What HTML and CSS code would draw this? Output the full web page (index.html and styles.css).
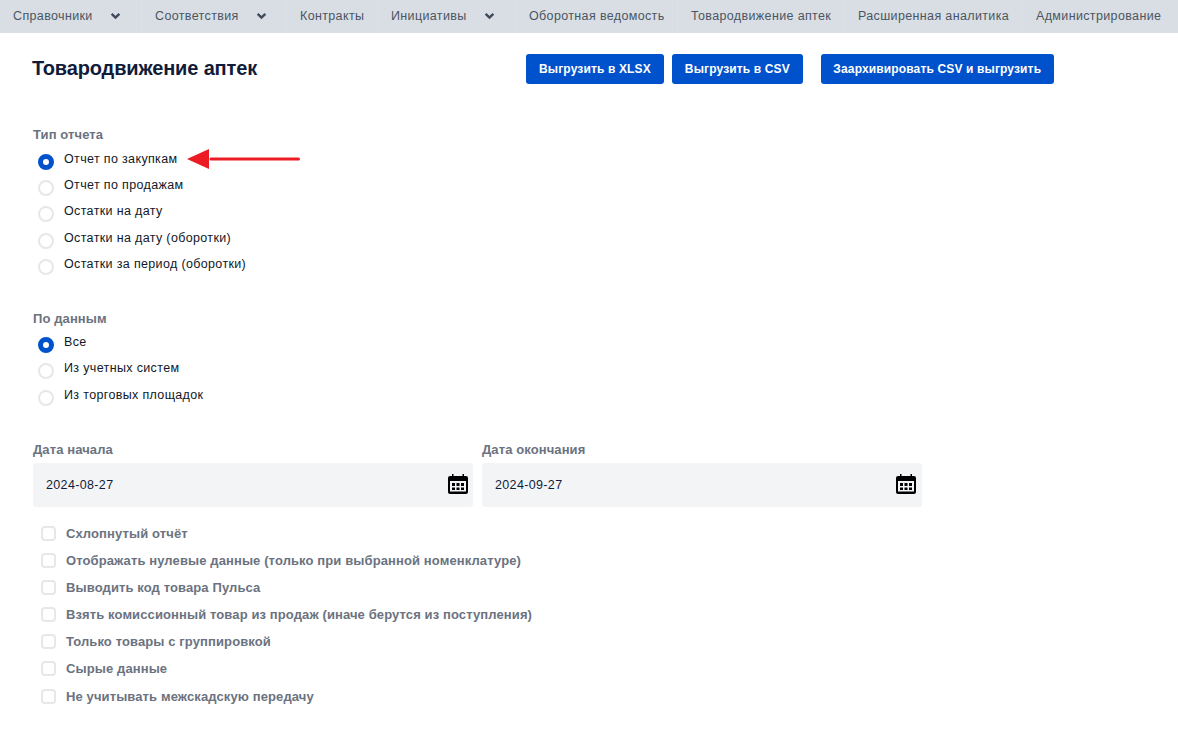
FILE: index.html
```html
<!DOCTYPE html>
<html lang="ru">
<head>
    <meta charset="UTF-8">
    <title>Товародвижение аптек</title>
    <link rel="stylesheet" href="styles.css">
</head>
<body>
    <nav class="nav">
        <a class="nav-item w-1">Справочники<svg class="chev" viewBox="0 0 10 7"><path d="M1.5 1.5 5 5l3.500-3.500"/></svg></a>
        <a class="nav-item w-2">Соответствия<svg class="chev" viewBox="0 0 10 7"><path d="M1.5 1.5 5 5l3.500-3.500"/></svg></a>
        <a class="nav-item w-3">Контракты</a>
        <a class="nav-item w-4">Инициативы<svg class="chev" viewBox="0 0 10 7"><path d="M1.5 1.5 5 5l3.500-3.500"/></svg></a>
        <a class="nav-item w-5">Оборотная ведомость</a>
        <a class="nav-item w-6">Товародвижение аптек</a>
        <a class="nav-item w-7">Расширенная аналитика</a>
        <a class="nav-item w-8">Администрирование</a>
    </nav>

    <main class="page">
        <header class="head">
            <h1>Товародвижение аптек</h1>
            <div class="actions">
                <button class="btn">Выгрузить в XLSX</button>
                <button class="btn">Выгрузить в CSV</button>
                <button class="btn btn-wide">Заархивировать CSV и выгрузить</button>
            </div>
        </header>

        <section class="group group-first">
            <div class="label label-first">Тип отчета</div>
            <div class="radio"><span class="dot on"></span>Отчет по закупкам</div>
            <div class="radio"><span class="dot"></span>Отчет по продажам</div>
            <div class="radio"><span class="dot"></span>Остатки на дату</div>
            <div class="radio"><span class="dot"></span>Остатки на дату (оборотки)</div>
            <div class="radio"><span class="dot"></span>Остатки за период (оборотки)</div>
            <svg class="arrow" viewBox="0 0 113 20"><path d="M111.500 10H24" stroke="#ed1c24" stroke-width="3" stroke-linecap="round"/><path d="M0 10 22 0v20z" fill="#ed1c24"/></svg>
        </section>

        <section class="group group-second">
            <div class="label label-second">По данным</div>
            <div class="radio"><span class="dot on"></span>Все</div>
            <div class="radio"><span class="dot"></span>Из учетных систем</div>
            <div class="radio"><span class="dot"></span>Из торговых площадок</div>
        </section>

        <section class="dates">
            <div class="date-col">
                <div class="label">Дата начала</div>
                <div class="date-input">2024-08-27
                    <svg class="cal" viewBox="0 0 20 20"><path fill-rule="evenodd" d="M4 0h1.500v2h9V0H16v2h2a2 2 0 0 1 2 2v14a2 2 0 0 1-2 2H2a2 2 0 0 1-2-2V4a2 2 0 0 1 2-2h2zM2 7v10.500h16V7z"/><path d="M4 9h3v3H4zM8.500 9h3v3h-3zM13 9h3v3h-3zM4 13.500h3v2.500H4zM8.500 13.500h3v2.500h-3zM13 13.500h3v2.500h-3z"/></svg>
                </div>
            </div>
            <div class="date-col">
                <div class="label">Дата окончания</div>
                <div class="date-input date-input-end">2024-09-27
                    <svg class="cal" viewBox="0 0 20 20"><path fill-rule="evenodd" d="M4 0h1.500v2h9V0H16v2h2a2 2 0 0 1 2 2v14a2 2 0 0 1-2 2H2a2 2 0 0 1-2-2V4a2 2 0 0 1 2-2h2zM2 7v10.500h16V7z"/><path d="M4 9h3v3H4zM8.500 9h3v3h-3zM13 9h3v3h-3zM4 13.500h3v2.500H4zM8.500 13.500h3v2.500h-3zM13 13.500h3v2.500h-3z"/></svg>
                </div>
            </div>
        </section>

        <section class="checks">
            <div class="check"><span class="box"></span>Схлопнутый отчёт</div>
            <div class="check"><span class="box"></span>Отображать нулевые данные (только при выбранной номенклатуре)</div>
            <div class="check"><span class="box"></span>Выводить код товара Пульса</div>
            <div class="check"><span class="box"></span>Взять комиссионный товар из продаж (иначе берутся из поступления)</div>
            <div class="check"><span class="box"></span>Только товары с группировкой</div>
            <div class="check"><span class="box"></span>Сырые данные</div>
            <div class="check"><span class="box"></span>Не учитывать межскадскую передачу</div>
        </section>
    </main>
</body>
</html>
```

FILE: styles.css
```css
html, body { margin: 0; padding: 0; }
body { font-family: "Liberation Sans", Arial, sans-serif; background: #fff; color: #111827; height: 731px; overflow: hidden; }

.nav { display: flex; height: 33px; background: #d9dee4; }
.nav-item { display: flex; align-items: center; box-sizing: border-box; height: 32px; padding-left: 13px; font-size: 12.500px; letter-spacing: 0.36px; color: #4b5563; border-right: 1px solid #dde1e6; white-space: nowrap; }
.w-1 { width: 142px; }
.w-2 { width: 145px; }
.w-3 { width: 91px; }
.w-4 { width: 138px; }
.w-5 { width: 162px; }
.w-6 { width: 167px; padding-left: 13px; }
.w-7 { width: 178px; }
.w-8 { flex: 1; border-right: 0; }
.chev { width: 11px; height: 8px; margin-left: 17px; fill: none; stroke: #3f4a5c; stroke-width: 2.200; }

.page { padding: 0 32px 0 33px; }
.head { display: flex; align-items: flex-start; height: 51px; padding-top: 21px; }
h1 { margin: 1px 0 0 -1px; width: 494px; font-size: 20px; line-height: 27px; font-weight: 700; letter-spacing: -0.15px; color: #111c3a; }
.actions { display: flex; }
.btn { height: 30px; padding: 0 13px; margin-right: 8px; border: 0; border-radius: 3px; background: #0052cc; color: #fff; font: 700 12px "Liberation Sans", Arial, sans-serif; letter-spacing: 0.14px; }
.btn-wide { margin-left: 10px; margin-right: 0; padding: 0 12.500px; }

.label { font-size: 13px; font-weight: 700; line-height: 16px; letter-spacing: 0.1px; color: #6b7280; }
.label-first { margin-bottom: 5.500px; }
.label-second { margin-bottom: 5px; }
.group { position: relative; }
.group-first { margin-top: 22px; }
.group-second { margin-top: 30.500px; }
.radio { display: flex; height: 26.400px; align-items: flex-start; font-size: 12.500px; letter-spacing: 0.35px; line-height: 16px; color: #111827; padding-top: 2px; box-sizing: border-box; }
.dot { width: 16px; height: 16px; margin: 3px 10px 0 5px; flex: none; box-sizing: border-box; border: 2px solid #e5e7eb; border-radius: 50%; background: #fff; }
.dot.on { border: 5.500px solid #0052cc; }
.arrow { position: absolute; left: 154px; top: 22px; width: 113px; height: 20px; }

.dates { display: flex; gap: 9px; margin-top: 31px; }
.date-col { width: 440px; }
.date-input { display: flex; align-items: center; justify-content: space-between; box-sizing: border-box; height: 44px; margin-top: 5px; padding: 0 5px 0 13px; background: #f3f4f6; border-radius: 3px; font-size: 12.500px; letter-spacing: 0.35px; color: #111c3a; }
.date-input-end { padding-right: 6px; }
.cal { width: 20px; height: 20px; margin-bottom: 2px; }

.checks { margin-top: 12.300px; }
.check { display: flex; align-items: center; height: 27.200px; font-size: 13px; font-weight: 700; letter-spacing: 0.11px; color: #6b7280; }
.box { width: 15px; height: 15px; margin: 0 10px 0 8px; flex: none; box-sizing: border-box; border: 2px solid #e5e7eb; border-radius: 4px; background: #fff; }
```
